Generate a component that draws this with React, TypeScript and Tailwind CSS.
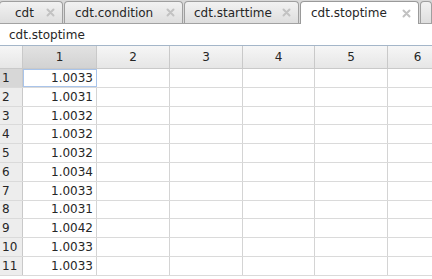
const tabs = [
  { label: "cdt", width: "w-[64px]", pad: "pl-[15px]", active: false },
  { label: "cdt.condition", width: "w-[119px]", pad: "pl-[10px]", active: false },
  { label: "cdt.starttime", width: "w-[115px]", pad: "pl-[9px]", active: false },
  { label: "cdt.stoptime", width: "w-[119px]", pad: "pl-[10px]", active: true },
];

const values = [
  "1.0033",
  "1.0031",
  "1.0032",
  "1.0032",
  "1.0032",
  "1.0034",
  "1.0033",
  "1.0031",
  "1.0042",
  "1.0033",
  "1.0033",
];

const colWidths = ["w-[74px]", "w-[73px]", "w-[73px]", "w-[72px]", "w-[73px]", "w-[60px]"];

function CloseIcon() {
  return (
    <svg width="9" height="9" viewBox="0 0 9 9" className="shrink-0">
      <path d="M1.5 1.5 L7.5 7.5 M7.5 1.5 L1.5 7.5" stroke="#c2c2c2" strokeWidth="2" strokeLinecap="round" />
    </svg>
  );
}

export default function App() {
  return (
    <div
      className="h-[279px] w-[432px] overflow-hidden bg-white text-[12px] text-[#262626]"
      style={{ fontFamily: '"DejaVu Sans", "Liberation Sans", sans-serif' }}
    >
      {/* tab strip */}
      <div className="-ml-[1px] flex h-[24px] items-end gap-[1px] border-b border-[#a2a2a2] bg-[#d9d9d9]">
        {tabs.map((t) => (
          <div
            key={t.label}
            className={
              t.active
                ? `${t.width} ${t.pad} relative -mb-[1px] flex h-[23px] shrink-0 items-center justify-between rounded-t-[4px] border border-b-0 border-[#9a9a9a] bg-white pr-[7px]`
                : `${t.width} ${t.pad} flex h-[22px] shrink-0 items-center justify-between rounded-t-[4px] border border-b-0 border-[#9f9f9f] bg-gradient-to-b from-[#f2f2f2] to-[#dedede] pr-[7px]`
            }
          >
            <span className="leading-none">{t.label}</span>
            <CloseIcon />
          </div>
        ))}
        <div className="h-[22px] flex-1 rounded-t-[4px] border border-b-0 border-[#9f9f9f] bg-gradient-to-b from-[#f2f2f2] to-[#dedede]" />
      </div>

      {/* variable name */}
      <div className="flex h-[22px] items-center border-b border-[#a4b6c9] pl-[9px]">
        cdt.stoptime
      </div>

      {/* grid */}
      <div className="flex h-[23px] border-b border-[#c9c9c9] bg-gradient-to-b from-[#f6f6f6] to-[#e6e6e6]">
        <div className="w-[23px] shrink-0 border-r border-[#c9c9c9]" />
        {colWidths.map((w, i) => (
          <div
            key={i}
            className={`${w} flex shrink-0 items-center justify-center border-r border-[#c9c9c9] ${
              i === 0 ? "bg-gradient-to-b from-[#e2e2e2] to-[#d2d2d2]" : ""
            }`}
          >
            {i + 1}
          </div>
        ))}
      </div>

      {values.map((v, r) => (
        <div key={r} className="flex h-[18.8px] border-b border-[#dadada]">
          <div
            className={`flex w-[23px] shrink-0 items-center border-r border-[#c9c9c9] pl-[2px] ${
              r === 0 ? "bg-[#d7d7d7]" : "bg-[#ededed]"
            }`}
          >
            {r + 1}
          </div>
          {colWidths.map((w, c) => (
            <div
              key={c}
              className={`${w} flex shrink-0 items-center justify-end pr-[3px] ${
                r === 0 && c === 0
                  ? "border border-[#a9c4ea]"
                  : "border-r border-[#d4d4d4]"
              }`}
            >
              {c === 0 ? v : ""}
            </div>
          ))}
        </div>
      ))}
    </div>
  );
}
